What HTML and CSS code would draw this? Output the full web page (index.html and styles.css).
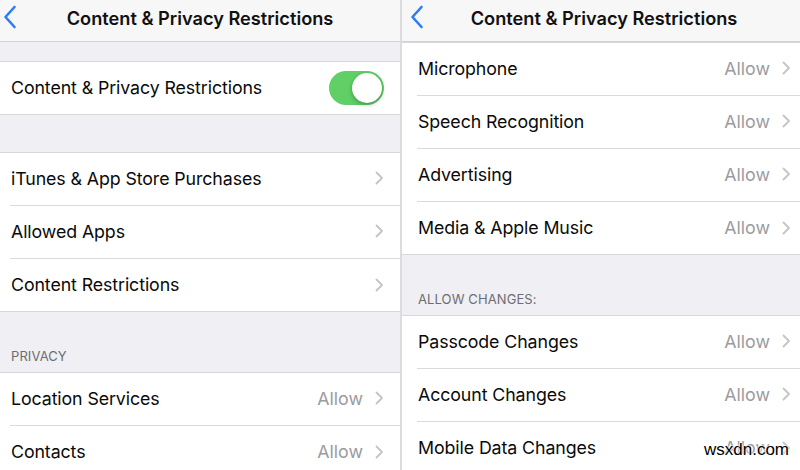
FILE: index.html
```html
<!DOCTYPE html>
<html>
<head>
<meta charset="utf-8">
<link rel="stylesheet" href="styles.css">
</head>
<body>
<div class="screen">
  <section class="panel panel-left">
    <header class="nav">
      <svg class="back" width="14" height="24" viewBox="0 0 14 24"><path d="M11.5 2 L2.5 12 L11.5 22" fill="none" stroke="#2d7cf5" stroke-width="2.6" stroke-linecap="round" stroke-linejoin="round"/></svg>
      <h1 class="title">Content &amp; Privacy Restrictions</h1>
    </header>
    <div class="spacer spacer-sm"></div>
    <div class="group">
      <div class="row"><div class="row-inner"><span class="label">Content &amp; Privacy Restrictions</span><span class="toggle"><span class="knob"></span></span></div></div>
    </div>
    <div class="spacer spacer-md"></div>
    <div class="group">
      <div class="row"><div class="row-inner"><span class="label">iTunes &amp; App Store Purchases</span><svg class="chev" width="9" height="14" viewBox="0 0 9 14"><path d="M1.5 1.5 L7 7 L1.5 12.5" fill="none" stroke="#c4c4c8" stroke-width="1.8" stroke-linecap="round" stroke-linejoin="round"/></svg></div></div>
      <div class="row"><div class="row-inner"><span class="label">Allowed Apps</span><svg class="chev" width="9" height="14" viewBox="0 0 9 14"><path d="M1.5 1.5 L7 7 L1.5 12.5" fill="none" stroke="#c4c4c8" stroke-width="1.8" stroke-linecap="round" stroke-linejoin="round"/></svg></div></div>
      <div class="row"><div class="row-inner"><span class="label">Content Restrictions</span><svg class="chev" width="9" height="14" viewBox="0 0 9 14"><path d="M1.5 1.5 L7 7 L1.5 12.5" fill="none" stroke="#c4c4c8" stroke-width="1.8" stroke-linecap="round" stroke-linejoin="round"/></svg></div></div>
    </div>
    <div class="section-header">PRIVACY</div>
    <div class="group">
      <div class="row"><div class="row-inner"><span class="label">Location Services</span><span class="value">Allow</span><svg class="chev" width="9" height="14" viewBox="0 0 9 14"><path d="M1.5 1.5 L7 7 L1.5 12.5" fill="none" stroke="#c4c4c8" stroke-width="1.8" stroke-linecap="round" stroke-linejoin="round"/></svg></div></div>
      <div class="row"><div class="row-inner"><span class="label">Contacts</span><span class="value">Allow</span><svg class="chev" width="9" height="14" viewBox="0 0 9 14"><path d="M1.5 1.5 L7 7 L1.5 12.5" fill="none" stroke="#c4c4c8" stroke-width="1.8" stroke-linecap="round" stroke-linejoin="round"/></svg></div></div>
    </div>
  </section>
  <div class="divider"></div>
  <section class="panel panel-right">
    <header class="nav">
      <svg class="back" width="14" height="24" viewBox="0 0 14 24"><path d="M11.5 2 L2.5 12 L11.5 22" fill="none" stroke="#2d7cf5" stroke-width="2.6" stroke-linecap="round" stroke-linejoin="round"/></svg>
      <h1 class="title">Content &amp; Privacy Restrictions</h1>
    </header>
    <div class="group">
      <div class="row"><div class="row-inner"><span class="label">Microphone</span><span class="value">Allow</span><svg class="chev" width="9" height="14" viewBox="0 0 9 14"><path d="M1.5 1.5 L7 7 L1.5 12.5" fill="none" stroke="#c4c4c8" stroke-width="1.8" stroke-linecap="round" stroke-linejoin="round"/></svg></div></div>
      <div class="row"><div class="row-inner"><span class="label">Speech Recognition</span><span class="value">Allow</span><svg class="chev" width="9" height="14" viewBox="0 0 9 14"><path d="M1.5 1.5 L7 7 L1.5 12.5" fill="none" stroke="#c4c4c8" stroke-width="1.8" stroke-linecap="round" stroke-linejoin="round"/></svg></div></div>
      <div class="row"><div class="row-inner"><span class="label">Advertising</span><span class="value">Allow</span><svg class="chev" width="9" height="14" viewBox="0 0 9 14"><path d="M1.5 1.5 L7 7 L1.5 12.5" fill="none" stroke="#c4c4c8" stroke-width="1.8" stroke-linecap="round" stroke-linejoin="round"/></svg></div></div>
      <div class="row"><div class="row-inner"><span class="label">Media &amp; Apple Music</span><span class="value">Allow</span><svg class="chev" width="9" height="14" viewBox="0 0 9 14"><path d="M1.5 1.5 L7 7 L1.5 12.5" fill="none" stroke="#c4c4c8" stroke-width="1.8" stroke-linecap="round" stroke-linejoin="round"/></svg></div></div>
    </div>
    <div class="section-header">ALLOW CHANGES:</div>
    <div class="group">
      <div class="row"><div class="row-inner"><span class="label">Passcode Changes</span><span class="value">Allow</span><svg class="chev" width="9" height="14" viewBox="0 0 9 14"><path d="M1.5 1.5 L7 7 L1.5 12.5" fill="none" stroke="#c4c4c8" stroke-width="1.8" stroke-linecap="round" stroke-linejoin="round"/></svg></div></div>
      <div class="row"><div class="row-inner"><span class="label">Account Changes</span><span class="value">Allow</span><svg class="chev" width="9" height="14" viewBox="0 0 9 14"><path d="M1.5 1.5 L7 7 L1.5 12.5" fill="none" stroke="#c4c4c8" stroke-width="1.8" stroke-linecap="round" stroke-linejoin="round"/></svg></div></div>
      <div class="row"><div class="row-inner"><span class="label">Mobile Data Changes</span><span class="value">Allow</span><svg class="chev" width="9" height="14" viewBox="0 0 9 14"><path d="M1.5 1.5 L7 7 L1.5 12.5" fill="none" stroke="#c4c4c8" stroke-width="1.8" stroke-linecap="round" stroke-linejoin="round"/></svg></div></div>
    </div>
    <div class="watermark">wsxdn.com</div>
  </section>
</div>
</body>
</html>
```

FILE: styles.css
```css
* { box-sizing: border-box; margin: 0; padding: 0; }
html, body { width: 800px; height: 470px; overflow: hidden; background: #efeff4; }
body { font-family: Inter, "Noto Sans", sans-serif; color: #0a0a0a; }

.screen { display: flex; width: 800px; height: 470px; overflow: hidden; }

.panel { background: #efeff4; height: 470px; overflow: hidden; display: flex; flex-direction: column; position: relative; }
.panel-left { width: 400px; }
.panel-right { width: 398px; }
.divider { width: 2px; background: #dcdcde; }

.nav {
  height: 42px; flex: none;
  background: #f7f7f8;
  border-bottom: 1px solid #d2d2d6;
  display: flex; align-items: center; justify-content: center;
  position: relative;
}
.back { position: absolute; top: 5px; }
.panel-left .back { left: 3px; }
.panel-right .back { left: 8px; }
.title { font-size: 18.2px; font-weight: 600; letter-spacing: 0; color: #111; margin-top: -6px; }
.panel-right .title { margin-left: 6px; }

.spacer { flex: none; }
.spacer-sm { height: 19px; }
.spacer-md { height: 37px; }

.group { flex: none; background: #fff; border-top: 1px solid #d8d8dc; border-bottom: 1px solid #d8d8dc; }

.panel-left .row { padding-left: 10px; }
.panel-right .row { padding-left: 15px; }
.row-inner {
  height: 53px;
  display: flex; align-items: center;
  border-bottom: 1px solid #dadade;
  padding-bottom: 2px;
}
.row:last-child .row-inner { height: 52px; border-bottom: none; padding-bottom: 1px; }
.panel-left .row-inner { padding-left: 1px; padding-right: 16px; }
.panel-right .row-inner { padding-left: 1px; padding-right: 9px; }

.label { flex: 1; font-size: 17.8px; letter-spacing: -0.1px; white-space: nowrap; }
.value { font-size: 17.8px; color: #9b9b9f; margin-right: 12px; }
.chev { flex: none; }

.toggle {
  width: 55px; height: 34px; border-radius: 17px;
  background: #5fcf66; position: relative; flex: none; margin-top: 1px;
}
.knob {
  position: absolute; right: 2px; top: 2px;
  width: 30px; height: 30px; border-radius: 50%;
  background: #fff; box-shadow: 0 2px 4px rgba(0,0,0,0.25), 0 0 1px rgba(0,0,0,0.2);
}

.section-header {
  flex: none; height: 60px;
  display: flex; align-items: flex-end;
  font-size: 13px; color: #6d6d72; letter-spacing: 0.1px;
  padding-bottom: 8px;
}
.panel-left .section-header { padding-left: 11px; }
.panel-right .section-header { padding-left: 16px; }

.watermark {
  position: absolute; right: 11px; bottom: 10px;
  font-family: "Liberation Sans", Arial, sans-serif; font-size: 17px; color: #000;
  text-shadow: 0 0 2px #fff, 0 0 2px #fff, 0 0 3px #fff;
}
```
